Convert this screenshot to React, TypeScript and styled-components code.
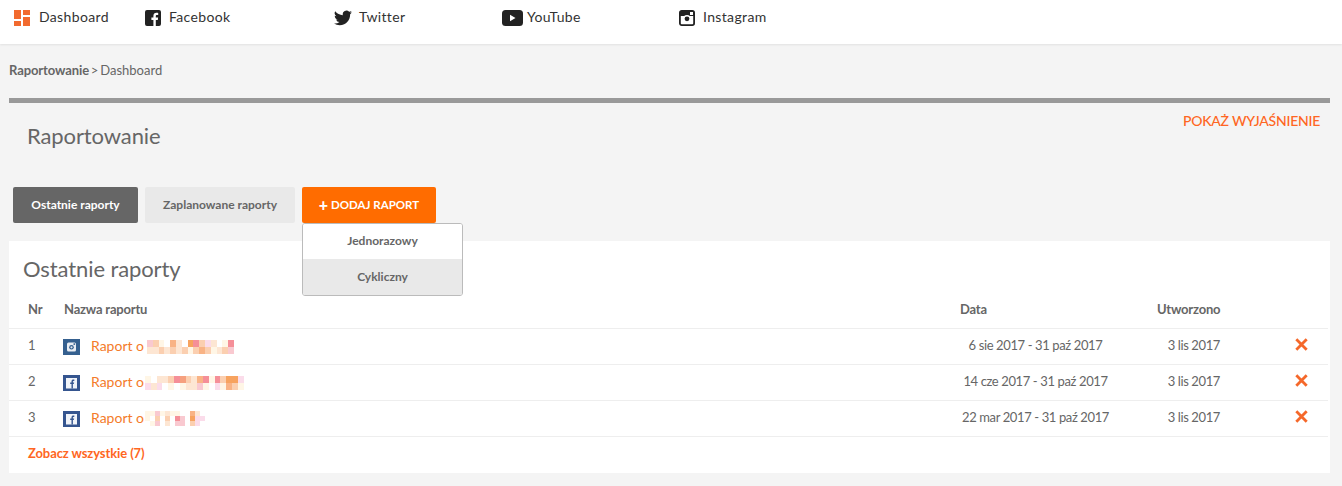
import React from "react";
import styled, { createGlobalStyle } from "styled-components";

const Global = createGlobalStyle`
  html, body { margin: 0; padding: 0; background: #f4f4f4; }
  body { font-family: Lato, "Liberation Sans", sans-serif; color: #555; }
  * { box-sizing: border-box; }
`;
const Page = styled.div`width: 1342px; height: 486px; overflow: hidden; background: #f4f4f4;`;
const TopBar = styled.nav`display: flex; align-items: center; height: 44px; padding: 0 0 9px 14px; background: #fff; box-shadow: 0 1px 2px rgba(0,0,0,.08);`;
const NavItem = styled.a<{ $w: number; $gap: number }>`display: flex; align-items: center; gap: ${p => p.$gap}px; width: ${p => p.$w}px; font-size: 14px; color: #333; letter-spacing: .35px;`;
const NavLabel = styled.span`padding-bottom: 2px;`;
const Content = styled.main`padding: 0 12px 0 9px;`;
const Crumbs = styled.div`height: 54px; padding-top: 18px; font-size: 13px; line-height: 16px; color: #666; word-spacing: -1.500px; b { font-weight: 700; letter-spacing: -.1px; }`;
const Header = styled.header`display: flex; justify-content: space-between; height: 89px; border-top: 5px solid #999; padding: 9px 0 0 18px;`;
const Title = styled.h1`margin: 10px 0 0; font-size: 22px; font-weight: 400; color: #666; line-height: 28px; letter-spacing: -.1px;`;
const Explain = styled.a`font-size: 14px; line-height: 17px; font-weight: 500; color: #ff6622; margin-right: 10px; letter-spacing: -.25px;`;
const Tabs = styled.div`position: relative; display: flex; gap: 7px; padding-left: 4px; height: 54px;`;
const Tab = styled.button<{ $active?: boolean }>`height: 36px; border: 0; border-radius: 2px; font: 700 12px Lato, sans-serif; padding: 0 0 2px; width: ${p => (p.$active ? 125 : 150)}px; background: ${p => (p.$active ? "#666" : "#e9e9e9")}; color: ${p => (p.$active ? "#fff" : "#666")};`;
const AddButton = styled.button`height: 36px; width: 134px; border: 0; border-radius: 2px; background: #ff6c00; color: #fff; font: 700 11.500px Lato, sans-serif; display: flex; align-items: center; justify-content: center; gap: 3px; padding: 0 0 2px; span { font-size: 16px; font-weight: 900; line-height: 11px; }`;
const Dropdown = styled.div`position: absolute; z-index: 2; left: 293px; top: 36px; width: 161px; height: 73px; display: flex; flex-direction: column; overflow: hidden; background: #fff; border: 1px solid #bbb; border-radius: 3px;`;
const DropItem = styled.div<{ $hover?: boolean }>`flex: ${p => (p.$hover ? "1" : "0 0 35px")}; display: flex; align-items: center; justify-content: center; padding-bottom: 2px; font-size: 12px; font-weight: 700; color: #666; background: ${p => (p.$hover ? "#e9e9e9" : "#fff")};`;
const Card = styled.section`background: #fff; height: 232px; padding: 14px 2px 0 0;`;
const CardTitle = styled.h2`margin: 0 0 0 14px; font-size: 22px; line-height: 28px; font-weight: 400; color: #666; letter-spacing: -.1px;`;
const Row = styled.div<{ $head?: boolean }>`display: grid; grid-template-columns: 36px 896px 197px 1fr; align-items: center; height: 36px; padding: 0 0 4px 19px; font-size: 13px; color: #666; border-bottom: 1px solid #eee; ${p => p.$head && `height: 40px; margin-top: 6px; padding-bottom: 0; font-weight: 700; letter-spacing: -.2px;`}`;
const Name = styled.div`display: flex; align-items: center; margin-left: -1px; padding-top: 4px;`;
const Link = styled.a`color: #f47b2a; font-size: 14px; margin: -2px 0 0 11px; width: 54px; white-space: nowrap;`;
const DataCell = styled.div`text-align: center; width: 159px; margin-left: -4px; font-size: 13px; letter-spacing: -.38px; white-space: nowrap;`;
const RowEnd = styled.div`display: flex; align-items: center; justify-content: space-between;`;
const CreatedCell = styled.div`width: 63px; text-align: right; letter-spacing: -.38px; white-space: nowrap;`;
const Remove = styled.button`border: 0; background: none; padding: 0; margin: 0 20px 0 0; height: 13px; width: 13px; display: block;`;
const More = styled.a`display: block; margin: 8px 0 0 19px; font-size: 13px; font-weight: 700; color: #ff6622; letter-spacing: -.1px;`;
const Mosaic = styled.svg`display: block; shape-rendering: crispEdges;`;

const DashIcon = () => (
  <svg width="16" height="16" viewBox="0 0 16 16"><path fill="#f26a2e" d="M0 0h7v9H0zM9 0h7v5H9zM9 7h7v9H9zM0 11h7v5H0z" /></svg>
);
const FbIcon = () => (
  <svg width="16" height="16" viewBox="0 0 16 16"><path fill="#222" d="M2 0h12a2 2 0 0 1 2 2v12a2 2 0 0 1-2 2h-3.200v-6h2l.3-2.400h-2.300V6.200c0-.7.2-1.200 1.200-1.200h1.200V2.900c-.2 0-.9-.1-1.800-.1-1.800 0-3 1.100-3 3.100v1.700h-2V10h2v6H2a2 2 0 0 1-2-2V2a2 2 0 0 1 2-2z" /></svg>
);
const TwIcon = () => (
  <svg width="18" height="16" viewBox="0 0 24 20"><path fill="#222" d="M24 2.400a9.800 9.800 0 0 1-2.800.8A4.900 4.900 0 0 0 23.300.5a9.800 9.800 0 0 1-3.100 1.200 4.900 4.900 0 0 0-8.400 4.500A14 14 0 0 1 1.700.9a4.900 4.900 0 0 0 1.500 6.600 4.900 4.900 0 0 1-2.200-.6v.1a4.900 4.900 0 0 0 3.900 4.800 4.900 4.900 0 0 1-2.200.1 4.900 4.900 0 0 0 4.600 3.400A9.900 9.900 0 0 1 0 17.300 14 14 0 0 0 7.500 19.500c9.100 0 14-7.500 14-14v-.6A10 10 0 0 0 24 2.400z" /></svg>
);
const YtIcon = () => (
  <svg width="21" height="16" viewBox="0 0 21 16"><rect width="21" height="16" rx="3.500" fill="#222" /><path fill="#fff" d="M8 4.800v6.400L13.500 8z" /></svg>
);
const IgIcon = () => (
  <svg width="16" height="16" viewBox="0 0 16 16"><rect x=".9" y=".9" width="14.200" height="14.200" rx="1.800" fill="#fff" stroke="#222" strokeWidth="1.800" /><path fill="#222" d="M1 1h14v5H1z" /><circle cx="8" cy="8.800" r="3.800" fill="#fff" /><circle cx="8" cy="8.800" r="2.400" fill="#222" /><rect x="11" y="2" width="3" height="3" fill="#fff" /></svg>
);
const TileIg = () => (
  <svg width="17" height="16" viewBox="0 0 17 16"><rect width="17" height="16" fill="#35608f" /><rect x="4" y="3.500" width="9" height="9" rx="1.500" fill="#e9edf3" /><circle cx="8.500" cy="8.300" r="2.300" fill="#35608f" /><circle cx="8.500" cy="8.300" r="1.100" fill="#dfe6ee" /><rect x="10.500" y="4.300" width="1.600" height="1.600" fill="#35608f" /></svg>
);
const TileFb = () => (
  <svg width="17" height="16" viewBox="0 0 17 16"><rect width="17" height="16" fill="#35558f" /><rect x="3" y="3" width="11" height="10.500" fill="#f1f4f9" /><path fill="#35558f" d="M8.500 13.500V9H7.200V7.500h1.300V6.300c0-1.200.8-1.800 1.800-1.800h1v1.400h-.7c-.5 0-.7.2-.7.700v.9h1.300L10.700 9H9.900v4.500z" /></svg>
);
const Close = () => (
  <svg width="13" height="13" viewBox="0 0 13 13"><path d="M1.300 1.300l10.400 10.400M11.700 1.300L1.300 11.700" stroke="#f5682a" strokeWidth="2.800" fill="none" /></svg>
);

type Cell = [number, number, string];
const c = { a: "#fde6d3", b: "#fbcfb0", d: "#f9b385", e: "#f7a35f", f: "#f58f98", g: "#f9c9d0", h: "#fff6e6", i: "#fbdcea", j: "#f6a07e" };
const seq = (row: number, list: string) =>
  list.split("").flatMap((k, i): Cell[] => (k === "." ? [] : [[i, row, c[k as keyof typeof c]]]));
const blur1 = [...seq(0, "gbh.da.efbia.hf"), ...seq(1, "aabababhbdbhabg")];
const blur2 = [...seq(0, "h.aabfjbadfhfbeei"), ...seq(1, "iai.h.haagh.ihdbh")];
const blur3 = [...seq(0, "hhghahh..da."), ...seq(1, "h.b.b.fg.eii"), ...seq(2, ".hg.a.gg.bi.")];

const Blur = ({ cells, offset, cols, rows, cw, ch }: { cells: Cell[]; offset: number; cols: number; rows: number; cw: number; ch: number }) => (
  <Mosaic width={offset + cols * cw} height={rows * ch}>
    {cells.map(([x, y, f]) => <rect key={`${x}-${y}`} x={offset + x * cw} y={y * ch} width={cw} height={ch} fill={f} />)}
  </Mosaic>
);

const rows = [
  { n: 1, icon: <TileIg />, cells: blur1, offset: 2, cols: 15, rn: 2, cw: 5.8, ch: 7, date: "6 sie 2017 - 31 paź 2017" },
  { n: 2, icon: <TileFb />, cells: blur2, offset: 0, cols: 17, rn: 2, cw: 5.8, ch: 7, date: "14 cze 2017 - 31 paź 2017" },
  { n: 3, icon: <TileFb />, cells: blur3, offset: 0, cols: 12, rn: 3, cw: 5, ch: 5, date: "22 mar 2017 - 31 paź 2017" },
];

export default function App() {
  return (
    <Page>
      <Global />
      <TopBar>
        <NavItem $w={131} $gap={9}><DashIcon /><NavLabel>Dashboard</NavLabel></NavItem>
        <NavItem $w={189} $gap={8}><FbIcon /><NavLabel>Facebook</NavLabel></NavItem>
        <NavItem $w={168} $gap={7}><TwIcon /><NavLabel>Twitter</NavLabel></NavItem>
        <NavItem $w={177} $gap={4}><YtIcon /><NavLabel>YouTube</NavLabel></NavItem>
        <NavItem $w={120} $gap={8}><IgIcon /><NavLabel>Instagram</NavLabel></NavItem>
      </TopBar>
      <Content>
        <Crumbs><b>Raportowanie</b> &gt; Dashboard</Crumbs>
        <Header>
          <Title>Raportowanie</Title>
          <Explain>POKAŻ WYJAŚNIENIE</Explain>
        </Header>
        <Tabs>
          <Tab $active>Ostatnie raporty</Tab>
          <Tab>Zaplanowane raporty</Tab>
          <AddButton><span>+</span>DODAJ RAPORT</AddButton>
          <Dropdown>
            <DropItem>Jednorazowy</DropItem>
            <DropItem $hover>Cykliczny</DropItem>
          </Dropdown>
        </Tabs>
        <Card>
          <CardTitle>Ostatnie raporty</CardTitle>
          <Row $head>
            <div>Nr</div>
            <div>Nazwa raportu</div>
            <div>Data</div>
            <div>Utworzono</div>
          </Row>
          {rows.map(r => (
            <Row key={r.n}>
              <div>{r.n}</div>
              <Name>{r.icon}<Link>Raport o</Link><Blur cells={r.cells} offset={r.offset} cols={r.cols} rows={r.rn} cw={r.cw} ch={r.ch} /></Name>
              <DataCell>{r.date}</DataCell>
              <RowEnd><CreatedCell>3 lis 2017</CreatedCell><Remove aria-label="Usuń"><Close /></Remove></RowEnd>
            </Row>
          ))}
          <More>Zobacz wszystkie (7)</More>
        </Card>
      </Content>
    </Page>
  );
}
